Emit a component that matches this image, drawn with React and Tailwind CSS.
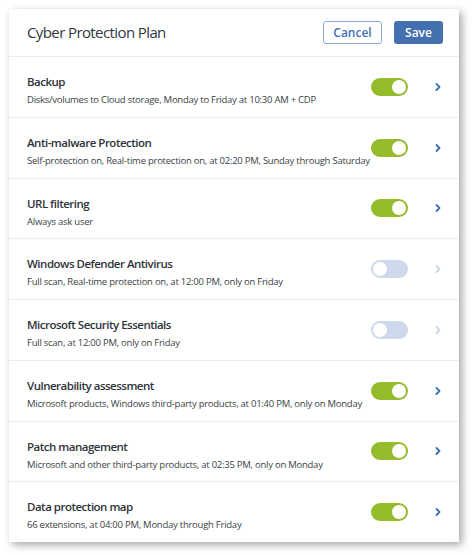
const items = [
  { title: 'Backup', desc: 'Disks/volumes to Cloud storage, Monday to Friday at 10:30 AM + CDP', on: true },
  { title: 'Anti-malware Protection', desc: 'Self-protection on, Real-time protection on, at 02:20 PM, Sunday through Saturday', on: true },
  { title: 'URL filtering', desc: 'Always ask user', on: true },
  { title: 'Windows Defender Antivirus', desc: 'Full scan, Real-time protection on, at 12:00 PM, only on Friday', on: false },
  { title: 'Microsoft Security Essentials', desc: 'Full scan, at 12:00 PM, only on Friday', on: false },
  { title: 'Vulnerability assessment', desc: 'Microsoft products, Windows third-party products, at 01:40 PM, only on Monday', on: true },
  { title: 'Patch management', desc: 'Microsoft and other third-party products, at 02:35 PM, only on Monday', on: true },
  { title: 'Data protection map', desc: '66 extensions, at 04:00 PM, Monday through Friday', on: true },
];

const Toggle = ({ on }) => (
  <div
    className={
      on
        ? 'w-[37px] h-[18px] rounded-full bg-[#93bb2b] flex items-center justify-end px-[2px]'
        : 'w-[37px] h-[18px] rounded-full bg-[#cdd8ea] flex items-center justify-start px-[2px]'
    }
  >
    <div className="w-[14px] h-[14px] rounded-full bg-white" />
  </div>
);

const Chevron = ({ on }) => (
  <svg width="8" height="10" viewBox="0 0 8 10" className={on ? 'text-[#3f6fb3]' : 'text-[#c9d4e6]'}>
    <path d="M2.5 2 L5.5 5 L2.5 8" fill="none" stroke="currentColor" strokeWidth="1.8" strokeLinecap="round" strokeLinejoin="round" />
  </svg>
);

export default function App() {
  return (
    <div className="w-[472px] h-[555px] bg-white p-[9px] pr-[13px] pb-[13px]" style={{ fontFamily: '"Open Sans", sans-serif' }}>
      <div className="bg-white shadow-[3px_3px_8px_rgba(0,0,0,0.35)] flex flex-col h-[533px] w-[450px]">
        <div className="h-[48px] shrink-0 flex items-center justify-between pl-[18px] pr-[16px] border-b border-[#e8eef7]">
          <h1 className="text-[15px] tracking-[-0.6px] text-[#2f3740] font-normal">Cyber Protection Plan</h1>
          <div className="flex gap-[12px]">
            <button className="w-[59px] h-[23px] border border-[#8aa8d6] rounded-[3px] text-[#3f6fb3] text-[12px] font-semibold">Cancel</button>
            <button className="w-[49px] h-[23px] bg-[#4570b0] rounded-[3px] text-white text-[12px] font-semibold">Save</button>
          </div>
        </div>
        {items.map((it, i) => (
          <div key={i} className={'flex-1 flex items-center pl-[18px] pr-[17px] ' + (i < items.length - 1 ? 'border-b border-[#e8eef7]' : '')}>
            <div className="flex-1 min-w-0 self-start pt-[17px]">
              <div className="text-[11.5px] tracking-[-0.5px] font-semibold text-[#2e3339] leading-[16px]">{it.title}</div>
              <div className="text-[9.5px] tracking-[-0.25px] text-[#3a3f45] leading-[14px] mt-[3px] whitespace-nowrap">{it.desc}</div>
            </div>
            <Toggle on={it.on} />
            <div className="w-[34px] shrink-0 flex justify-end">
              <Chevron on={it.on} />
            </div>
          </div>
        ))}
      </div>
    </div>
  );
}
